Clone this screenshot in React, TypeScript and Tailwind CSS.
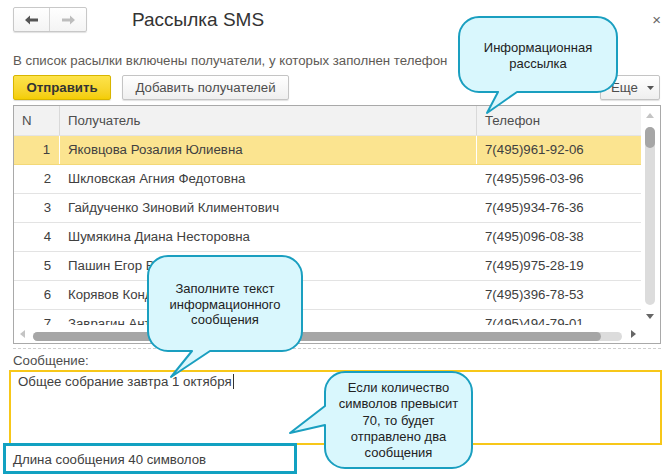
import React from "react";

const rows = [
  ["1", "Яковцова Розалия Юлиевна", "7(495)961-92-06"],
  ["2", "Шкловская Агния Федотовна", "7(495)596-03-96"],
  ["3", "Гайдученко Зиновий Климентович", "7(495)934-76-36"],
  ["4", "Шумякина Диана Несторовна", "7(495)096-08-38"],
  ["5", "Пашин Егор Всеволодович", "7(495)975-28-19"],
  ["6", "Корявов Кондрат Тимофеевич", "7(495)396-78-53"],
  ["7", "Заврагин Антон Павлович", "7(495)494-79-01"],
];

export default function App() {
  return (
    <div
      className="relative w-[671px] h-[475px] overflow-hidden bg-white text-[13.25px] text-[#4d4d4d]"
      style={{ fontFamily: '"Liberation Sans", Arial, sans-serif' }}
    >
      {/* top bar */}
      <div className="flex items-center pt-[7px] pl-[13px] pr-[10px]">
        <div className="flex h-[25px] w-[74px] rounded-[2px] border border-[#c8c8c8] bg-gradient-to-b from-white to-[#f4f4f4] shadow-[0_1px_1px_rgba(0,0,0,0.12)]">
          <div className="flex w-[36px] items-center justify-center border-r border-[#d4d4d4]">
            <svg width="14" height="10" viewBox="0 0 14 10">
              <path d="M0 5 L5 0.5 V3.5 H13 V6.5 H5 V9.5 Z" fill="#555" />
            </svg>
          </div>
          <div className="flex flex-1 items-center justify-center">
            <svg width="14" height="10" viewBox="0 0 14 10">
              <path d="M14 5 L9 0.5 V3.5 H1 V6.5 H9 V9.5 Z" fill="#bdbdbd" />
            </svg>
          </div>
        </div>
        <div className="ml-[45px] text-[19px] leading-[24px] text-[#333]">Рассылка SMS</div>
        <div className="ml-auto text-[15px] leading-none text-[#666]">×</div>
      </div>

      {/* description */}
      <div className="mt-[21px] pl-[13px] leading-[16px] text-[#5e5a55]">
        В список расылки включены получатели, у которых заполнен телефон
      </div>

      {/* buttons */}
      <div className="mt-[6px] flex h-[25px] pl-[13px] pr-[11px]">
        <div className="flex w-[98px] items-center justify-center rounded-[2px] border border-[#d8b500] bg-gradient-to-b from-[#fde34a] to-[#f4cd00] font-bold text-[#333] shadow-[0_1px_1px_rgba(0,0,0,0.15)]">
          Отправить
        </div>
        <div className="ml-[11px] flex w-[167px] items-center justify-center rounded-[2px] border border-[#c4c4c4] bg-gradient-to-b from-white to-[#efefef] text-[#4d4d4d] shadow-[0_1px_1px_rgba(0,0,0,0.12)]">
          Добавить получателей
        </div>
        <div className="ml-auto flex w-[60px] items-center justify-end gap-[9px] rounded-[2px] border border-[#c4c4c4] bg-gradient-to-b from-white to-[#efefef] pr-[5px] text-[#4d4d4d] shadow-[0_1px_1px_rgba(0,0,0,0.12)]">
          <span>Еще</span>
          <svg width="7" height="4" viewBox="0 0 7 4">
            <path d="M0 0 H7 L3.5 4 Z" fill="#555" />
          </svg>
        </div>
      </div>

      {/* table */}
      <div className="ml-[13px] mt-[5px] flex h-[239px] w-[648px] flex-col border border-[#a9a9a9]">
        <div className="flex h-[219px]">
          <div className="flex w-[627px] flex-col overflow-hidden">
            <div className="flex h-[30px] shrink-0 items-center border-b border-[#e4e4e4] bg-[#f2f2f2]">
              <div className="flex h-full w-[46px] items-center border-r border-[#d9d9d9] pl-[8px]">N</div>
              <div className="flex h-full w-[417px] items-center border-r border-[#d9d9d9] pl-[8px]">Получатель</div>
              <div className="flex h-full flex-1 items-center pl-[8px]">Телефон</div>
            </div>
            {rows.map((r, i) => (
              <div
                key={r[0]}
                className={`flex h-[29px] shrink-0 items-center border-b ${
                  i === 0 ? "border-[#f3d877] bg-[#fbe490]" : "border-[#e3e3e3] bg-white"
                } text-[#404040]`}
              >
                <div className={`flex h-full w-[46px] items-center justify-end pr-[9px] ${i === 0 ? "border-r border-white" : ""}`}>{r[0]}</div>
                <div className={`flex h-full w-[417px] items-center pl-[8px] ${i === 0 ? "border-r border-white" : ""}`}>{r[1]}</div>
                <div className="flex h-full flex-1 items-center pl-[8px]">{r[2]}</div>
              </div>
            ))}
          </div>
          {/* vertical scrollbar */}
          <div className="relative flex-1">
            <svg className="absolute left-[5px] top-[7px]" width="8" height="5" viewBox="0 0 8 5">
              <path d="M0 5 L4 0 L8 5 Z" fill="#c4c4c4" />
            </svg>
            <div className="absolute left-[4px] top-[21px] h-[178px] w-[10px] rounded-[5px] bg-[#dcdcdc]">
              <div className="h-[21px] w-full rounded-[5px] bg-[#a6a6a6]" />
            </div>
            <svg className="absolute left-[5px] top-[208px]" width="8" height="5" viewBox="0 0 8 5">
              <path d="M0 0 L8 0 L4 5 Z" fill="#666" />
            </svg>
          </div>
        </div>
        {/* horizontal scrollbar */}
        <div className="relative h-[18px]">
          <svg className="absolute left-[6px] top-[5px]" width="5" height="8" viewBox="0 0 5 8">
            <path d="M5 0 L0 4 L5 8 Z" fill="#c4c4c4" />
          </svg>
          <div className="absolute left-[19px] top-[7px] h-[9px] w-[589px] rounded-[5px] bg-[#dcdcdc]">
            <div className="h-full w-[568px] rounded-[5px] bg-[#a6a6a6]" />
          </div>
          <svg className="absolute left-[617px] top-[5px]" width="5" height="8" viewBox="0 0 5 8">
            <path d="M0 0 L5 4 L0 8 Z" fill="#666" />
          </svg>
        </div>
      </div>

      {/* dashed separator */}
      <div className="ml-[13px] mt-[4px] w-[648px] border-t border-dashed border-[#cfcfcf]" />

      {/* message */}
      <div className="mt-[4px] pl-[13px] leading-[15px]">Сообщение:</div>
      <div className="ml-[9px] mt-[2px] h-[75px] w-[653px] border-2 border-[#f7c719] pl-[7px] pt-[2px] leading-[16px] text-[#404040]">
        Общее собрание завтра 1 октября<span className="ml-[1px] inline-block h-[15px] w-[1px] bg-[#333] align-[-3px]" />
      </div>
      <div className="flex h-[30px] items-center pl-[13px] text-[#404040]">Длина сообщения 40 символов</div>

      {/* highlight box */}
      <div className="absolute left-[3px] top-[443px] h-[31px] w-[294px] border-[3px] border-[#12a1c1]" />

      {/* callouts */}
      <svg className="pointer-events-none absolute left-0 top-0" width="671" height="475" viewBox="0 0 671 475">
        <g fill="#d9f7fd" stroke="#1a9fc0" strokeWidth="2" strokeLinejoin="round">
          <path d="M479 17 H597 A20 20 0 0 1 617 37 V72 A20 20 0 0 1 597 92 H517 L487 113 L498 92 H479 A20 20 0 0 1 459 72 V37 A20 20 0 0 1 479 17 Z" />
          <path d="M168 256 H282 A20 20 0 0 1 302 276 V331 A20 20 0 0 1 282 351 H210 L171 377 L192 351 H168 A20 20 0 0 1 148 331 V276 A20 20 0 0 1 168 256 Z" />
          <path d="M345 372 H452 A20 20 0 0 1 472 392 V448 A20 20 0 0 1 452 468 H345 A20 20 0 0 1 325 448 V425 L290 433 L325 406 V392 A20 20 0 0 1 345 372 Z" />
        </g>
      </svg>
      <div className="absolute left-[459px] top-[40px] w-[158px] text-center text-[13px] leading-[16px] text-[#222]">
        Информационная
        <br />
        рассылка
      </div>
      <div className="absolute left-[148px] top-[281px] w-[154px] text-center text-[13px] leading-[15.5px] text-[#222]">
        Заполните текст
        <br />
        информационного
        <br />
        сообщения
      </div>
      <div className="absolute left-[325px] top-[380px] w-[147px] text-center text-[13px] leading-[16.3px] text-[#222]">
        Если количество
        <br />
        символов превысит
        <br />
        70, то будет
        <br />
        отправлено два
        <br />
        сообщения
      </div>
    </div>
  );
}
